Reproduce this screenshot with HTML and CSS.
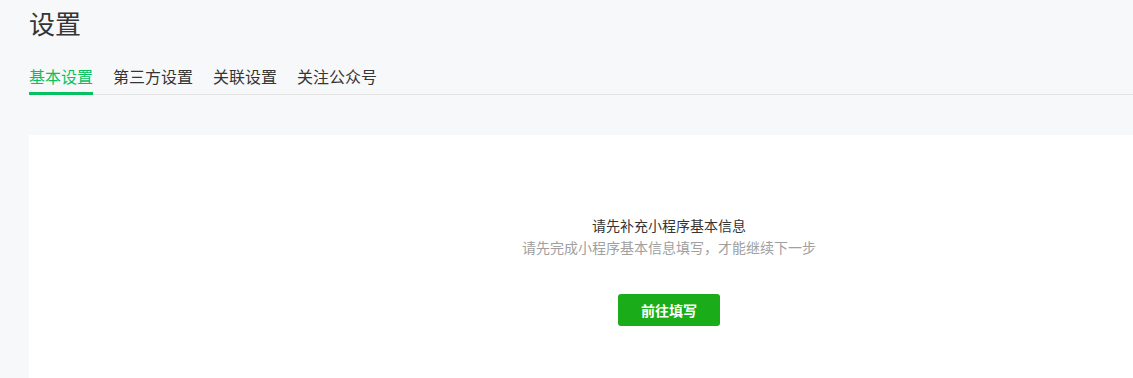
FILE: index.html
```html
<!DOCTYPE html>
<html>
<head>
    <meta charset="utf-8">
    <title>设置</title>
    <link rel="stylesheet" href="styles.css">
</head>
<body>

<div class="page">
    <h1 class="title">设置</h1>
    <div class="tabs">
        <a class="tab active">基本设置</a>
        <a class="tab">第三方设置</a>
        <a class="tab">关联设置</a>
        <a class="tab">关注公众号</a>
    </div>

    <div class="card">
        <div class="empty">
            <div class="empty-title">请先补充小程序基本信息</div>
            <div class="empty-desc">请先完成小程序基本信息填写，才能继续下一步</div>
            <button class="btn-primary">前往填写</button>
        </div>
    </div>
</div>

</body>
</html>
```

FILE: styles.css
```css
html, body {
    margin: 0;
    padding: 0;
    overflow: hidden;
}
body {
    font-family: "Noto Sans CJK SC", "Noto Sans", sans-serif;
    background-color: #f7f8fa;
    color: #353535;
}
.page {
    width: 1280px;
    padding-left: 29px;
}
.title {
    margin: 0;
    padding-top: 4px;
    font-size: 26px;
    font-weight: normal;
    line-height: 38px;
    color: #353535;
}
.tabs {
    display: flex;
    gap: 20px;
    margin-top: 22px;
    border-bottom: 1px solid #e2e2e2;
}
.tab {
    font-size: 16px;
    line-height: 24px;
    padding-bottom: 4px;
    color: #353535;
    cursor: pointer;
    border-bottom: 3px solid transparent;
    margin-bottom: -1px;
}
.tab.active {
    color: #07c160;
    border-bottom-color: #07c160;
}
.card {
    margin-top: 40px;
    background-color: #fff;
    height: 243px;
}
.empty {
    display: flex;
    flex-direction: column;
    align-items: center;
    padding-top: 79px;
}
.empty-title {
    font-size: 14px;
    line-height: 22px;
    color: #353535;
}
.empty-desc {
    font-size: 14px;
    line-height: 22px;
    color: #a0a0a0;
}
.btn-primary {
    margin-top: 36px;
    width: 102px;
    height: 32px;
    border: none;
    border-radius: 3px;
    background-color: #1aad19;
    color: #fff;
    font-family: inherit;
    font-size: 14px;
    font-weight: bold;
    cursor: pointer;
}
```
